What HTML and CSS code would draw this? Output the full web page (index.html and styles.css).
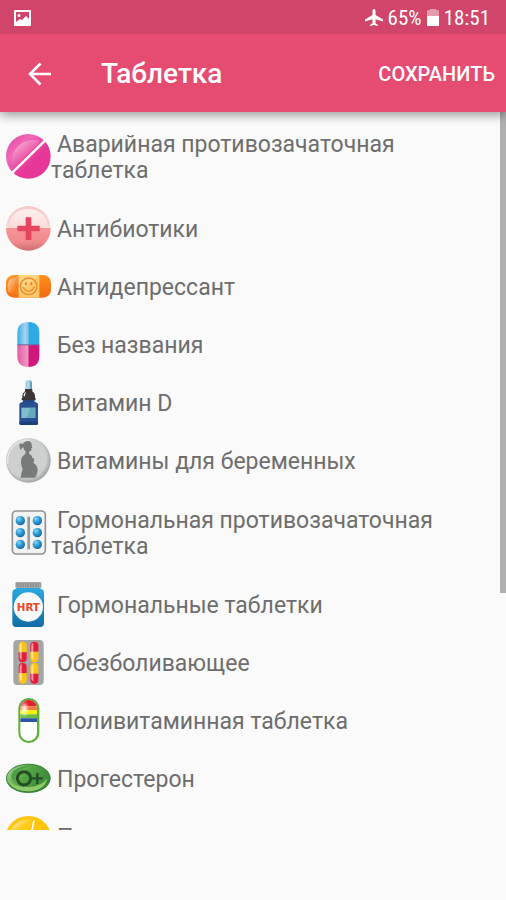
FILE: index.html
```html
<!DOCTYPE html>
<html lang="ru">
<head>
  <meta charset="UTF-8">
  <meta name="viewport" content="width=device-width, initial-scale=1">
  <title>Таблетка</title>
  <link rel="stylesheet" href="styles.css">
</head>
<body>
  <div class="status-bar">
    <svg class="status-picture" viewBox="0 0 17 16">
      <path fill="#fff" fill-rule="evenodd" d="M1 0h15q1 0 1 1v14q0 1-1 1H1q-1 0-1-1V1q0-1 1-1zM2 2v10l4-3 2 1 4-4 3 3V2zM5 4a1.500 1.500 0 1 1 0 3a1.500 1.500 0 1 1 0-3z"/>
    </svg>
    <div class="status-info">
      <svg class="status-plane" viewBox="0 0 18 17">
        <path fill="#fff" d="M9 0c1 0 1.500 1 1.500 2v4l7.500 4.500v2l-7.500-2.300v4L13 16v1l-4-1-4 1v-1l2.500-1.800v-4L0 12.500v-2L7.500 6V2C7.500 1 8 0 9 0z"/>
      </svg>
      <span>65%</span>
      <svg class="status-battery" viewBox="0 0 12 17">
        <path fill="#e59ab0" d="M3 0h6v1h2q1 0 1 1v6H0V2q0-1 1-1h2z"/>
        <path fill="#fff" d="M0 7h12v10H0z"/>
      </svg>
      <span>18:51</span>
    </div>
  </div>

  <header class="toolbar">
    <button class="back" type="button" aria-label="Назад">
      <svg viewBox="0 0 24 24"><path fill="none" stroke="#fff" stroke-width="2.600" d="M23 12H2M12.500 1.500L2 12l10.500 10.500"/></svg>
    </button>
    <h1>Таблетка</h1>
    <button class="save" type="button">СОХРАНИТЬ</button>
  </header>

  <main class="content">
    <ul class="pill-list">
      <li>
        <button class="pill pill-tall" type="button">
          <svg viewBox="0 0 135 135">
            <defs>
              <linearGradient id="pink" x1="0" y1="0" x2="1" y2="1"><stop offset="0" stop-color="#e23a9b"/><stop offset=".3" stop-color="#f06ab9"/><stop offset=".6" stop-color="#e73798"/></linearGradient>
              <linearGradient id="pinkShine" x1="0" y1="0" x2=".8" y2="1"><stop offset="0" stop-color="#fbc6e4"/><stop offset=".8" stop-color="#e73798"/></linearGradient>
            </defs>
            <circle cx="67" cy="67" r="67" fill="url(#pink)"/>
            <path fill="url(#pinkShine)" d="M17 94C12 46 48 14 94 18L101 27L27 99z"/>
            <path stroke="#fff" stroke-width="7" d="M19 116L117 20"/>
          </svg>
          <span>Аварийная противозачаточная таблетка</span>
        </button>
      </li>
      <li>
        <button class="pill" type="button">
          <svg viewBox="0 0 135 135">
            <defs>
              <linearGradient id="rose" x1="0" y1="0" x2="0" y2="1"><stop offset="0" stop-color="#f6c8c8"/><stop offset=".49" stop-color="#f8dad8"/><stop offset=".5" stop-color="#f79498"/><stop offset=".8" stop-color="#f08a8d"/><stop offset="1" stop-color="#cf6e71"/></linearGradient>
              <linearGradient id="roseShine" x1="0" y1="0" x2="0" y2="1"><stop offset="0" stop-color="#fdf0ee"/><stop offset="1" stop-color="#f8dcda"/></linearGradient>
            </defs>
            <circle cx="67" cy="67" r="67" fill="url(#rose)"/>
            <path fill="url(#roseShine)" d="M9 66C9 29 34 9 67 9s58 20 58 57z"/>
            <path fill="#e8435f" d="M59 34h17v25h25v17H76v26H59V76H34V59h25z"/>
          </svg>
          <span>Антибиотики</span>
        </button>
      </li>
      <li>
        <button class="pill" type="button">
          <svg viewBox="0 0 135 135">
            <defs>
              <linearGradient id="orange" x1="0" y1="0" x2=".2" y2="1"><stop offset="0" stop-color="#ff981c"/><stop offset="1" stop-color="#f36f16"/></linearGradient>
              <linearGradient id="orangeShine" x1="0" y1="0" x2="1" y2="1"><stop offset="0" stop-color="#ffd8b0"/><stop offset=".7" stop-color="#fb7d19"/></linearGradient>
            </defs>
            <rect y="33" width="135" height="68" rx="24" fill="url(#orange)"/>
            <path fill="url(#orangeShine)" d="M7 84C-1 49 15 38 38 38v55z"/>
            <path fill="#ffc96b" d="M38 33h62v68H38z"/>
            <path fill="#ffdc91" d="M38 33h62L38 88z" opacity=".6"/>
            <g fill="none" stroke="#ee8a25" stroke-width="4"><circle cx="68" cy="67" r="25"/><path d="M52 72q16 20 32 0M50 69l5 4M81 73l5-4"/></g>
            <g fill="#ee7a18"><ellipse cx="60" cy="59" rx="3" ry="5"/><ellipse cx="76" cy="59" rx="3" ry="5"/></g>
          </svg>
          <span>Антидепрессант</span>
        </button>
      </li>
      <li>
        <button class="pill" type="button">
          <svg viewBox="0 0 135 135">
            <defs>
              <linearGradient id="skyShine" x1="0" y1=".3" x2="1" y2=".3"><stop offset="0" stop-color="#38abe2"/><stop offset=".7" stop-color="#a7d4ef"/><stop offset="1" stop-color="#7bc2e9"/></linearGradient>
              <linearGradient id="magentaShine"><stop offset="0" stop-color="#e25ca2"/><stop offset="1" stop-color="#f09bc5"/></linearGradient>
            </defs>
            <path fill="url(#skyShine)" d="M67 0v69H34V33Q34 0 67 0z"/>
            <path fill="#2daae4" d="M67 0q33 0 33 33v36H67z"/>
            <path fill="url(#magentaShine)" d="M34 69h33v66q-33 0-33-33z"/>
            <path fill="#cf1779" d="M67 69h33v33q0 33-33 33z"/>
            <path fill="#74609f" d="M34 67h66v3H34z"/>
          </svg>
          <span>Без названия</span>
        </button>
      </li>
      <li>
        <button class="pill" type="button">
          <svg viewBox="0 0 135 135">
            <defs>
              <linearGradient id="glass"><stop offset="0" stop-color="#83c2d5"/><stop offset=".4" stop-color="#b9e2ec"/><stop offset="1" stop-color="#538ba7"/></linearGradient>
            </defs>
            <path fill="url(#glass)" d="M59 28V7q1-7 9-7t10 7v21z"/>
            <path fill="#3b3536" d="M57 27h22v7q8 5 8 13v7l2 1v6H47v-6l2-1v-7q0-8 8-13z"/>
            <path fill="#eee" d="M57 37q-5 4-4 12h4q0-7 3-12z"/>
            <path fill="#285091" d="M51 61h34v4l8 3q3 1 3 6v56q0 5-5 5H45q-5 0-5-5V74q0-5 3-6l8-3z"/>
            <path fill="#1b3f7b" d="M51 61h34v4H51zM40 125h56v5q0 5-5 5H45q-5 0-5-5z"/>
            <path fill="#7fbdcc" d="M46 83h42v31H46z"/>
            <path fill="#67a7bc" d="M73 83h15v31H63z"/>
          </svg>
          <span>Витамин D</span>
        </button>
      </li>
      <li>
        <button class="pill" type="button">
          <svg viewBox="0 0 135 135">
            <defs>
              <radialGradient id="silver" cx=".46" cy=".45" r=".55"><stop offset=".8" stop-color="#cdd0cf"/><stop offset="1" stop-color="#a3a4a4"/></radialGradient>
            </defs>
            <circle cx="67" cy="67" r="67" fill="url(#silver)"/>
            <path fill="none" stroke="#e5e6e6" stroke-width="4" d="M5 76C1 31 36 4 72 7"/>
            <path fill="#777a7a" d="M40 21q1-5 7-4l4 2q4-10 15-10 11 1 11 12l2 8-3 2v6q-1 4-7 3l1 8q8 4 9 11l6 3-2 4 2 2-3 6q13 8 13 23 0 12-8 22H44q2-15 6-25-6-13-5-24 0-13 9-19 6-3 5-11-6-4-7-13l-5 4v5q-7-3-6-8z"/>
          </svg>
          <span>Витамины для беременных</span>
        </button>
      </li>
      <li>
        <button class="pill pill-tall" type="button">
          <svg viewBox="0 0 135 135">
            <defs>
              <radialGradient id="bead" cx=".35" cy=".3" r=".75"><stop offset="0" stop-color="#8bd9f8"/><stop offset=".45" stop-color="#319fd7"/><stop offset="1" stop-color="#12649f"/></radialGradient>
            </defs>
            <rect x="19" y="3" width="99" height="129" rx="12" fill="#f1f2f2" stroke="#929395" stroke-width="5"/>
            <path fill="#98999b" d="M64 20h8v98h-8z"/>
            <g fill="url(#bead)">
              <circle cx="43" cy="32" r="14"/><circle cx="94" cy="32" r="14"/>
              <circle cx="43" cy="68" r="14"/><circle cx="94" cy="68" r="14"/>
              <circle cx="43" cy="103" r="14"/><circle cx="94" cy="103" r="14"/>
            </g>
          </svg>
          <span>Гормональная противозачаточная таблетка</span>
        </button>
      </li>
      <li>
        <button class="pill" type="button">
          <svg viewBox="0 0 135 135">
            <defs>
              <linearGradient id="jar" x1="0" y1="0" x2="0" y2="1"><stop offset="0" stop-color="#2ba8e1"/><stop offset="1" stop-color="#126ca6"/></linearGradient>
            </defs>
            <rect x="28" width="78" height="18" rx="3" fill="#a6a7a8"/>
            <path stroke="#858687" stroke-width="12" stroke-dasharray="2 3" d="M32 9h71"/>
            <path fill="url(#jar)" d="M31 18h72v2q11 1 11 12v92q0 11-11 11H30q-11 0-11-11V32q0-11 12-12z"/>
            <circle cx="67" cy="75" r="44" fill="#f7f9fa"/>
            <text class="jar-label" x="67" y="86" text-anchor="middle">HRT</text>
          </svg>
          <span>Гормональные таблетки</span>
        </button>
      </li>
      <li>
        <button class="pill" type="button">
          <svg viewBox="0 0 135 135">
            <defs>
              <g id="capsuleTop"><path fill="#ffc20e" d="M0 32V12Q0 0 12 0t12 12v20z"/><path fill="#e81c38" d="M0 32h24v18q0 12-12 12T0 50z"/><path fill="#fff" opacity=".55" d="M3 12q0-7 6-9v52q-6-2-6-8z"/></g>
              <g id="capsuleBottom"><path fill="#e81c38" d="M0 30V12Q0 0 12 0t12 12v18z"/><path fill="#ffc20e" d="M0 30h24v20q0 12-12 12T0 50z"/><path fill="#fff" opacity=".55" d="M3 12q0-7 6-9v52q-6-2-6-8z"/></g>
            </defs>
            <rect x="22" width="91" height="135" rx="12" fill="#a5a5a5"/>
            <use href="#capsuleTop" x="38" y="5"/><use href="#capsuleBottom" x="73" y="5"/>
            <use href="#capsuleBottom" x="38" y="69"/><use href="#capsuleTop" x="73" y="69"/>
          </svg>
          <span>Обезболивающее</span>
        </button>
      </li>
      <li>
        <button class="pill" type="button">
          <svg viewBox="0 0 135 135">
            <defs>
              <clipPath id="rainbowClip"><rect x="43" y="6" width="50" height="123" rx="25"/></clipPath>
              <radialGradient id="rainbowShine"><stop offset="0" stop-color="#fff"/><stop offset="1" stop-color="#fff" stop-opacity="0"/></radialGradient>
            </defs>
            <rect x="37" width="63" height="135" rx="31" fill="#5fae38"/>
            <g clip-path="url(#rainbowClip)">
              <path fill="#fff" d="M40 0h60v135H40z"/>
              <path fill="#e4202e" d="M40 0h60v25H40z"/><path fill="#f47b3b" d="M40 25h60v12H40z"/>
              <path fill="#fff200" d="M40 37h60v12H40z"/><path fill="#70bd44" d="M40 49h60v12H40z"/>
              <path fill="#2855a4" d="M40 61h60v11H40z"/>
              <ellipse cx="55" cy="33" rx="14" ry="26" fill="url(#rainbowShine)"/>
            </g>
          </svg>
          <span>Поливитаминная таблетка</span>
        </button>
      </li>
      <li>
        <button class="pill" type="button">
          <svg viewBox="0 0 135 135">
            <defs>
              <linearGradient id="green" x1="0" y1="0" x2="1" y2=".5"><stop offset="0" stop-color="#b0da95"/><stop offset=".5" stop-color="#56a544"/><stop offset="1" stop-color="#3c8b39"/></linearGradient>
            </defs>
            <ellipse cx="67" cy="67" rx="67" ry="44" fill="#39833a"/>
            <ellipse cx="66" cy="66" rx="63" ry="40" fill="url(#green)"/>
            <path fill="#8fca6a" d="M4 70q20 26 66 23 38-2 54-26-8 38-57 39-50-1-63-36z"/>
            <path fill="#4c9f45" d="M22 45q28-20 70-14-50 0-61 26-6 18 0 25-25-15-9-37z"/>
            <g fill="none" stroke="#234d23" stroke-width="9"><circle cx="54" cy="67" r="20"/><path stroke-width="7" d="M76 67h34M94 51v33"/></g>
          </svg>
          <span>Прогестерон</span>
        </button>
      </li>
      <li>
        <button class="pill" type="button">
          <svg viewBox="0 0 135 135">
            <defs>
              <linearGradient id="gold" x1="0" y1="0" x2="1" y2="1"><stop offset="0" stop-color="#fff"/><stop offset=".5" stop-color="#ffcc1b"/></linearGradient>
            </defs>
            <ellipse cx="67" cy="67" rx="67" ry="61" fill="#ffc40b"/>
            <path fill="url(#gold)" d="M11 67C13 34 38 15 77 16L63 67z"/>
            <path stroke="#fff" stroke-width="5" d="M84 19L64 116"/>
          </svg>
          <span>Противозачаточная</span>
        </button>
      </li>
    </ul>
    <div class="scroll-thumb"></div>
  </main>
</body>
</html>
```
FILE: styles.css
```css
* {
  box-sizing: border-box;
}
body {
  display: flex;
  flex-direction: column;
  height: 100vh;
  margin: 0;
  padding-bottom: 70px;
  overflow: hidden;
  background: #fafafa;
  color: #6d6d6d;
  font-family: Roboto, sans-serif;
}
button {
  border: 0;
  padding: 0;
  background: none;
  color: inherit;
  font: inherit;
  cursor: pointer;
}
.status-bar {
  display: flex;
  flex: none;
  align-items: center;
  justify-content: space-between;
  z-index: 2;
  height: 34px;
  padding: 1px 16px 0 14px;
  background: #d1456a;
  color: #fff;
  font-family: "Roboto Condensed", Roboto, sans-serif;
  font-size: 21px;
}
.status-info {
  display: flex;
  align-items: center;
  gap: 5px;
}
.status-picture {
  width: 17px;
  height: 16px;
}
.status-plane {
  width: 18px;
  height: 17px;
}
.status-battery {
  width: 12px;
  height: 17px;
}
.toolbar {
  display: flex;
  flex: none;
  align-items: center;
  z-index: 1;
  height: 78px;
  padding: 1px 11px 0 28px;
  background: #e64c72;
  color: #fff;
  box-shadow: 0 3px 10px rgba(0, 0, 0, 0.4);
}
.back svg {
  display: block;
  width: 24px;
  height: 24px;
}
.toolbar h1 {
  flex: 1;
  margin: 0;
  padding-left: 49px;
  font-size: 28px;
  font-weight: 500;
}
.save {
  font-size: 20px;
  font-weight: 500;
}
.content {
  position: relative;
  flex: 1;
  min-height: 0;
  padding-top: 3px;
  overflow: hidden;
}
.pill-list {
  margin: 0;
  padding: 0;
  list-style: none;
}
.pill {
  display: flex;
  align-items: center;
  width: 100%;
  min-height: 58px;
  padding: 16px 24px 16px 6px;
  text-align: left;
  font-size: 23px;
  line-height: 26px;
}
.pill-tall {
  min-height: 86px;
}
.pill svg {
  flex: none;
  width: 45px;
  height: 45px;
  margin: -12px 0 -8px;
}
.pill span {
  text-indent: 6px;
}
.jar-label {
  fill: #f04423;
  font-family: "DejaVu Sans", sans-serif;
  font-size: 31px;
  font-weight: bold;
}
.scroll-thumb {
  position: absolute;
  top: 0;
  right: 0;
  width: 6px;
  height: 67%;
  background: #b0b0b0;
}
```
